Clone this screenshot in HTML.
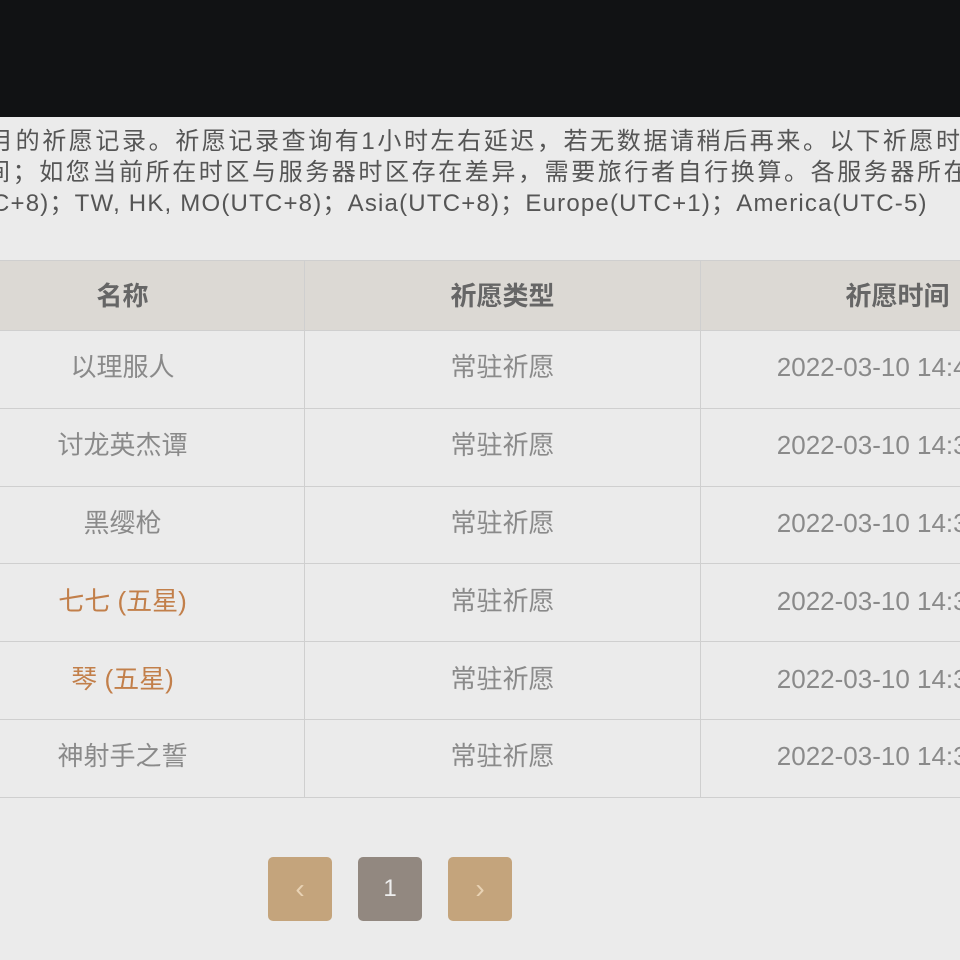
<!DOCTYPE html>
<html><head><meta charset="utf-8"><style>
html,body{margin:0;padding:0;width:960px;height:960px;overflow:hidden;background:#ebebeb;font-family:"Liberation Sans","Noto Sans CJK SC",sans-serif;}
#w{position:relative;width:960px;height:960px;overflow:hidden;}
.top{position:absolute;left:0;top:0;width:960px;height:117px;background:#111214;}
.ln{position:absolute;white-space:nowrap;font-size:24px;color:#555;line-height:32px;}
table{position:absolute;left:-60px;top:260px;width:1154px;border-collapse:collapse;table-layout:fixed;}
td,th{border:1px solid #cfcfcf;text-align:center;font-size:26px;color:#8a8a8a;font-weight:normal;padding:0;white-space:nowrap;overflow:hidden;line-height:30px;}
th{background:#dcd9d4;color:#666;font-weight:bold;height:68px;padding-top:1px;}
td{height:72.8px;padding-bottom:4px;}
.o{color:#c27f4a;}
.b{position:absolute;top:857px;width:64px;height:64px;border-radius:5px;background:#c4a47c;color:#e8d2b4;font-size:28px;line-height:64px;text-align:center;}
</style></head><body><div id="w">
<div class="top"></div>
<div class="ln" style="left:-11px;top:126px;letter-spacing:2.6px">月的祈愿记录。祈愿记录查询有1小时左右延迟，若无数据请稍后再来。以下祈愿时</div>
<div class="ln" style="left:-14px;top:157px;letter-spacing:2.6px">间；如您当前所在时区与服务器时区存在差异，需要旅行者自行换算。各服务器所在</div>
<div class="ln" style="left:-8px;top:188px;letter-spacing:1.2px">C+8)；TW, HK, MO(UTC+8)；Asia(UTC+8)；Europe(UTC+1)；America(UTC-5)</div>
<table>
<colgroup><col style="width:364px"><col style="width:396px"><col style="width:394px"></colgroup>
<tr><th>名称</th><th>祈愿类型</th><th>祈愿时间</th></tr>
<tr><td>以理服人</td><td>常驻祈愿</td><td>2022-03-10 14:49:03</td></tr>
<tr><td>讨龙英杰谭</td><td>常驻祈愿</td><td>2022-03-10 14:38:51</td></tr>
<tr><td>黑缨枪</td><td>常驻祈愿</td><td>2022-03-10 14:38:51</td></tr>
<tr><td class="o">七七 (五星)</td><td>常驻祈愿</td><td>2022-03-10 14:38:51</td></tr>
<tr><td class="o">琴 (五星)</td><td>常驻祈愿</td><td>2022-03-10 14:38:51</td></tr>
<tr><td>神射手之誓</td><td>常驻祈愿</td><td>2022-03-10 14:38:51</td></tr>
</table>
<div class="b" style="left:268px">&#8249;</div>
<div class="b" style="left:358px;background:#928880;color:#eee;font-size:24px">1</div>
<div class="b" style="left:448px">&#8250;</div>
</div></body></html>
